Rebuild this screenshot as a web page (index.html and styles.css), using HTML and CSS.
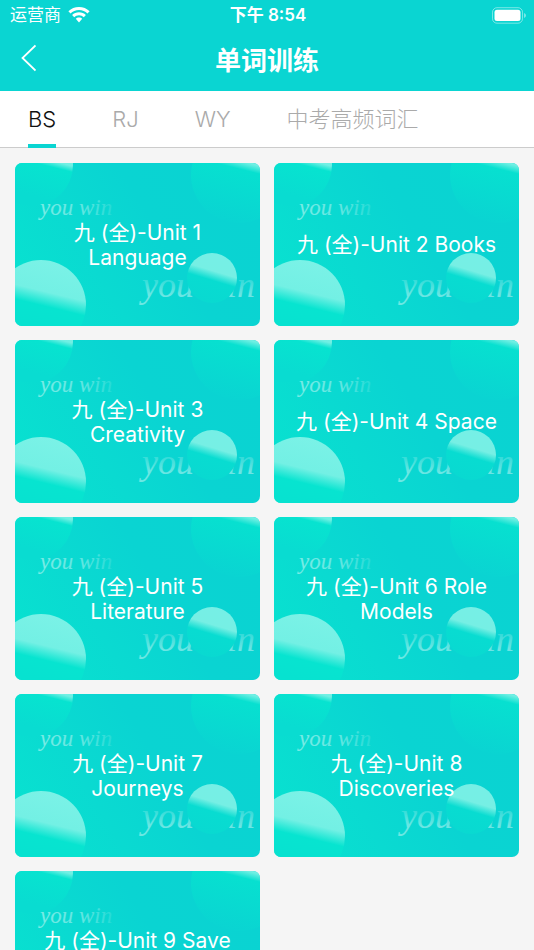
FILE: index.html
```
<!DOCTYPE html>
<html lang="zh-CN">
<head>
    <meta charset="UTF-8">
    <meta name="viewport" content="width=device-width, initial-scale=1.0">
    <title>单词训练</title>
    <link rel="stylesheet" href="styles.css">
</head>
<body>
    <!-- 卡片背景 -->
    <svg class="defs" aria-hidden="true">
        <defs>
            <linearGradient id="cardBg" x1="0" y1="0.7" x2="1" y2="0.3">
                <stop offset="0" stop-color="#08e1d0"/>
                <stop offset="0.3" stop-color="#0adad1"/>
                <stop offset="0.6" stop-color="#0ad4d2"/>
                <stop offset="1" stop-color="#0ad3d2"/>
            </linearGradient>
            <linearGradient id="bigBall" gradientUnits="userSpaceOnUse" x1="44" y1="97" x2="28" y2="163">
                <stop offset="0" stop-color="#7bf2e7"/>
                <stop offset="0.5" stop-color="#73f0e4"/>
                <stop offset="0.71" stop-color="#07e4d0"/>
                <stop offset="1" stop-color="#07e2d0"/>
            </linearGradient>
            <linearGradient id="smallBall" gradientUnits="userSpaceOnUse" x1="204" y1="90" x2="189" y2="140">
                <stop offset="0" stop-color="#76efe6"/>
                <stop offset="0.36" stop-color="#76efe4"/>
                <stop offset="0.54" stop-color="#08dcd1"/>
                <stop offset="1" stop-color="#09d9d1"/>
            </linearGradient>
            <linearGradient id="leftBall" gradientUnits="userSpaceOnUse" x1="49" y1="-6" x2="38" y2="38">
                <stop offset="0" stop-color="#76f0e5"/>
                <stop offset="0.15" stop-color="#70efe3"/>
                <stop offset="0.28" stop-color="#07e3d0"/>
                <stop offset="1" stop-color="#09dcd1"/>
            </linearGradient>
            <linearGradient id="rightBall" gradientUnits="userSpaceOnUse" x1="235" y1="-8" x2="218" y2="60">
                <stop offset="0" stop-color="#76f0e5"/>
                <stop offset="0.12" stop-color="#70efe3"/>
                <stop offset="0.23" stop-color="#07e0d0"/>
                <stop offset="1" stop-color="#0ad4d2"/>
            </linearGradient>
            <linearGradient id="smallWord" gradientUnits="userSpaceOnUse" x1="25" y1="0" x2="98" y2="0">
                <stop offset="0" stop-color="#fff" stop-opacity="0.45"/>
                <stop offset="0.6" stop-color="#fff" stop-opacity="0.35"/>
                <stop offset="1" stop-color="#fff" stop-opacity="0.1"/>
            </linearGradient>
            <linearGradient id="largeWord" gradientUnits="userSpaceOnUse" x1="0" y1="112" x2="0" y2="146">
                <stop offset="0" stop-color="#fff" stop-opacity="0.1"/>
                <stop offset="0.6" stop-color="#fff" stop-opacity="0.4"/>
                <stop offset="1" stop-color="#fff" stop-opacity="0.4"/>
            </linearGradient>
        </defs>
        <symbol id="cardArt" viewBox="0 0 245 163" preserveAspectRatio="xMidYMid slice">
            <rect width="245" height="163" fill="url(#cardBg)"/>
            <circle cx="17" cy="2" r="41" fill="url(#leftBall)"/>
            <circle cx="224" cy="12" r="48" fill="url(#rightBall)"/>
            <circle cx="26" cy="142" r="45" fill="url(#bigBall)"/>
            <text class="art-small" x="25" y="52" fill="url(#smallWord)">you win</text>
            <text class="art-large" x="127" y="134" fill="url(#largeWord)">you win</text>
            <circle cx="197" cy="115" r="25" fill="url(#smallBall)"/>
        </symbol>
    </svg>

    <div class="app">
        <header class="header">
            <div class="status-bar">
                <div class="carrier">
                    <span>运营商</span>
                    <svg width="22" height="16" viewBox="0 0 22 16" fill="#fff" aria-hidden="true">
                        <path d="M11 0C6.900 0 3.200 1.600.4 4.200l2.100 2.200C4.700 4.300 7.700 3 11 3s6.300 1.300 8.500 3.400l2.100-2.200C18.800 1.600 15.100 0 11 0z"/>
                        <path d="M11 5.200c-2.700 0-5.100 1-6.900 2.800l2.100 2.200C7.500 9 9.100 8.200 11 8.200s3.500.8 4.800 2l2.100-2.200C16.100 6.200 13.700 5.200 11 5.200z"/>
                        <path d="M11 10.400c-1.300 0-2.400.5-3.200 1.300L11 15.500l3.200-3.800c-.8-.8-1.900-1.300-3.200-1.300z"/>
                    </svg>
                </div>
                <div class="time">下午 8:54</div>
                <div class="battery">
                    <svg width="34" height="17" viewBox="0 0 34 17" aria-hidden="true">
                        <rect x="0.500" y="0.700" width="30" height="15.500" rx="4.500" fill="none" stroke="#fff" stroke-opacity="0.450"/>
                        <rect x="2.500" y="2.700" width="26" height="11.300" rx="2.500" fill="#fff"/>
                        <path d="M32 6v5c1.200-.4 2-1.400 2-2.500S33.200 6.400 32 6z" fill="#fff" fill-opacity="0.450"/>
                    </svg>
                </div>
            </div>
            <div class="nav-bar">
                <button type="button" class="back" aria-label="返回">
                    <svg width="16" height="28" viewBox="0 0 16 28" fill="none" stroke="#fff" stroke-width="1.800" aria-hidden="true">
                        <path d="M15.500 1.500L2.500 14l13 12.500"/>
                    </svg>
                </button>
                <h1>单词训练</h1>
            </div>
        </header>

        <nav class="tabs">
            <button type="button" class="tab active">BS</button>
            <button type="button" class="tab">RJ</button>
            <button type="button" class="tab">WY</button>
            <button type="button" class="tab">中考高频词汇</button>
        </nav>

        <main class="units">
            <a href="#" class="card"><svg class="art" aria-hidden="true"><use href="#cardArt"/></svg><span>九 (全)-Unit 1 Language</span></a>
            <a href="#" class="card"><svg class="art" aria-hidden="true"><use href="#cardArt"/></svg><span>九 (全)-Unit 2 Books</span></a>
            <a href="#" class="card"><svg class="art" aria-hidden="true"><use href="#cardArt"/></svg><span>九 (全)-Unit 3 Creativity</span></a>
            <a href="#" class="card"><svg class="art" aria-hidden="true"><use href="#cardArt"/></svg><span>九 (全)-Unit 4 Space</span></a>
            <a href="#" class="card"><svg class="art" aria-hidden="true"><use href="#cardArt"/></svg><span>九 (全)-Unit 5 Literature</span></a>
            <a href="#" class="card"><svg class="art" aria-hidden="true"><use href="#cardArt"/></svg><span>九 (全)-Unit 6 Role Models</span></a>
            <a href="#" class="card"><svg class="art" aria-hidden="true"><use href="#cardArt"/></svg><span>九 (全)-Unit 7 Journeys</span></a>
            <a href="#" class="card"><svg class="art" aria-hidden="true"><use href="#cardArt"/></svg><span>九 (全)-Unit 8 Discoveries</span></a>
            <a href="#" class="card"><svg class="art" aria-hidden="true"><use href="#cardArt"/></svg><span>九 (全)-Unit 9 Save the Planet</span></a>
        </main>
    </div>
</body>
</html>
```
FILE: styles.css
```
* {
    box-sizing: border-box;
}
body {
    margin: 0;
    background-color: #f5f5f5;
    font-family: Inter, "Noto Sans CJK SC", sans-serif;
}
button {
    padding: 0;
    border: none;
    background: none;
    font-family: inherit;
    cursor: pointer;
}
.defs {
    position: absolute;
    width: 0;
    height: 0;
}
.app {
    display: flex;
    flex-direction: column;
    height: 100vh;
}
.header {
    flex: none;
    background-color: #0ad5d2;
    color: white;
}
.status-bar {
    display: grid;
    grid-template-columns: 1fr auto 1fr;
    align-items: center;
    height: 30px;
    padding: 0 8px 0 10px;
    font-size: 17px;
    line-height: 30px;
}
.carrier {
    display: flex;
    align-items: center;
    gap: 7px;
}
.time {
    font-weight: 600;
}
.battery {
    display: flex;
    justify-content: flex-end;
}
.nav-bar {
    display: grid;
    grid-template-columns: 60px 1fr 60px;
    align-items: center;
    height: 61px;
}
.back {
    height: 60px;
    padding: 0 0 6px 20px;
    text-align: left;
}
.back svg {
    display: block;
}
h1 {
    margin: 0;
    font-size: 26px;
    font-weight: 600;
    line-height: 60px;
    text-align: center;
}
.tabs {
    display: flex;
    flex: none;
    gap: 56px;
    height: 57px;
    padding: 0 28px;
    border-bottom: 1px solid #ccc;
    background-color: white;
}
.tab {
    height: 57px;
    padding-top: 4px;
    border-bottom: 4px solid transparent;
    color: #aaa;
    font-size: 22px;
    font-weight: 300;
    line-height: 49px;
    white-space: nowrap;
}
.tab.active {
    border-bottom-color: #0ad5d2;
    color: #111;
}
/* 单元列表 */
.units {
    display: grid;
    flex: 1;
    grid-template-columns: 1fr 1fr;
    grid-auto-rows: max-content;
    gap: 14px;
    min-height: 0;
    padding: 15px;
    overflow-y: auto;
    scrollbar-width: none;
}
.card {
    display: flex;
    position: relative;
    align-items: center;
    justify-content: center;
    aspect-ratio: 245 / 163;
    padding: 0 20px;
    border-radius: 7px;
    overflow: hidden;
    color: white;
    font-size: 21px;
    line-height: 25px;
    text-align: center;
    text-decoration: none;
}
.card span {
    position: relative;
}
.art {
    position: absolute;
    top: 0;
    left: 0;
    width: 100%;
    height: 100%;
}
.art-small,
.art-large {
    font-family: "Liberation Serif", serif;
    font-style: italic;
}
.art-small {
    font-size: 23px;
}
.art-large {
    font-size: 36px;
}
```
